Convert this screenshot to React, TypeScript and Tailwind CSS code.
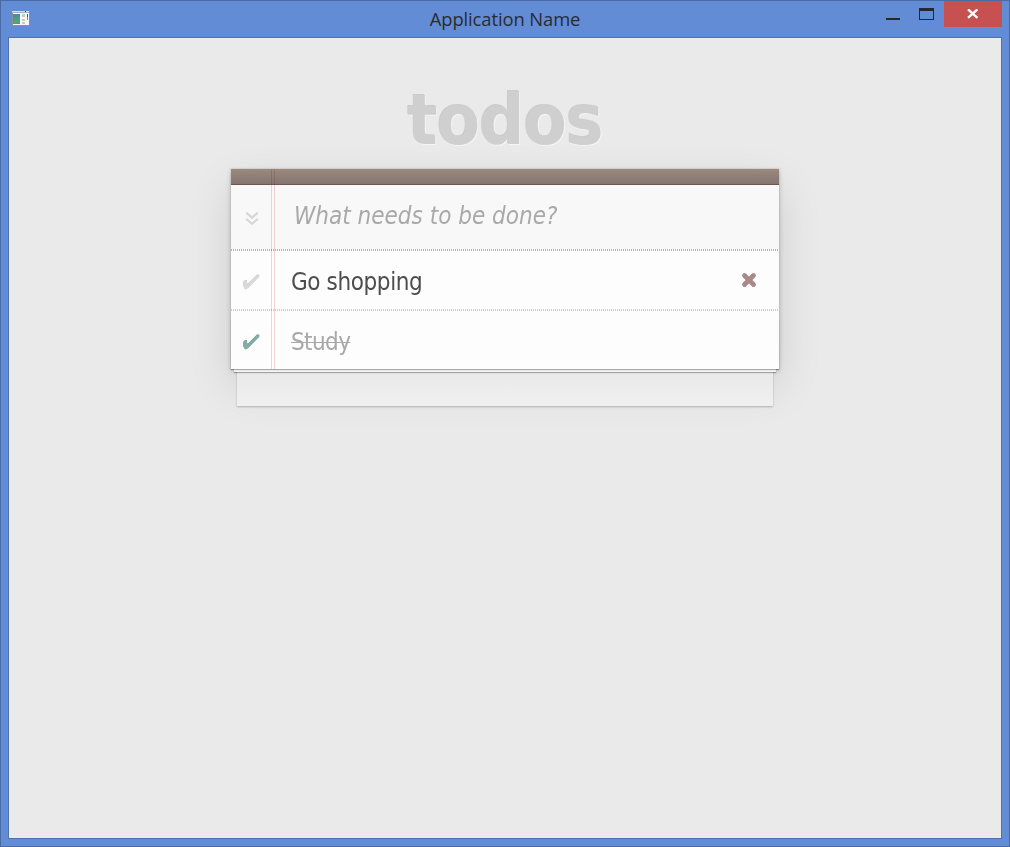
import React from "react";

const CHECK = "M1.3 10.3 L2.2 9.2 L4.6 8.6 L5.2 9.4 L4.8 11.6 L6 12 L15 3 L17.2 3 L17.2 5 L6.4 16 L4 17.6 L2.6 17 L1.3 14.5 Z";

function Check({ color, shadow }: { color: string; shadow: string }) {
  return (
    <svg width="19" height="20" viewBox="0 0 19 20" className="mt-[3px] ml-[11px]">
      <path d={CHECK} fill={shadow} transform="translate(0 -0.6)" />
      <path d={CHECK} fill={color} />
    </svg>
  );
}

function TitleBar() {
  return (
    <header className="relative flex h-9 shrink-0 items-start">
      <svg width="18" height="17" viewBox="0 0 18 17" className="mt-[10px] ml-[11px]" shapeRendering="crispEdges">
        <rect x="0" y="0" width="18" height="15" fill="#8b8f96" />
        <rect x="1" y="2" width="16" height="12" fill="#f6f6f6" />
        <rect x="0" y="0" width="17" height="1" fill="#d8dce4" />
        <rect x="0" y="1" width="17" height="1" fill="#a9b0bd" />
        <rect x="13" y="0" width="1" height="1" fill="#34507f" />
        <rect x="1" y="3" width="7" height="10" fill="#4c9b86" />
        <rect x="1" y="3" width="7" height="3" fill="#5189a9" />
        <rect x="2" y="9" width="5" height="3" fill="#58a56c" />
        <rect x="10" y="3" width="3" height="3" fill="#c8c8c8" />
        <rect x="10" y="8" width="3" height="2" fill="#c8c8c8" />
        <rect x="10" y="11" width="3" height="2" fill="#c8c8c8" />
        <rect x="15" y="3" width="1" height="3" fill="#32628c" />
        <rect x="15" y="6" width="1" height="3" fill="#5ba568" />
      </svg>
      <h1 className="absolute inset-x-0 top-[5px] text-center font-['Open_Sans',sans-serif] text-[18.4px] leading-[25px] tracking-[-0.1px] text-[#292b30]">
        Application Name
      </h1>
      <div className="ml-auto flex">
        <svg width="58" height="26" viewBox="0 0 58 26" shapeRendering="crispEdges">
          <rect x="0" y="17" width="14" height="2" fill="#2a2729" />
          <rect x="33" y="7" width="15" height="3" fill="#2a2729" />
          <path d="M33.5 7.5H47.5V18.5H33.5Z" fill="none" stroke="#2a2729" />
        </svg>
        <div className="mr-[7px] flex h-[26px] w-[58px] items-center justify-center bg-[#c75050]">
          <svg width="12" height="10" viewBox="0 0 12 10" className="-ml-px">
            <path d="M1 0.3 L10.4 8.9 M10.4 0.3 L1 8.9" stroke="#fff" strokeWidth="2.3" />
          </svg>
        </div>
      </div>
    </header>
  );
}

function DottedLine({ color }: { color: string }) {
  return (
    <svg width="548" height="2" className="block" shapeRendering="crispEdges">
      <path d="M0 1H548" stroke={color} strokeWidth="2" strokeDasharray="1 1" />
    </svg>
  );
}

function TodoCard() {
  return (
    <section className="relative isolate mt-6 w-[548px] bg-white/90 font-['DejaVu_Sans_Condensed','DejaVu_Sans',sans-serif] text-2xl shadow-[0_0_0_1px_rgba(0,0,0,0.06),0_2px_6px_rgba(0,0,0,0.2),0_17px_42px_rgba(0,0,0,0.12)]">
      <div className="absolute inset-x-[6px] -bottom-[37px] -z-10 h-[60px] bg-linear-to-b from-[#e9e9e9] from-40% to-[#f0f0f0] shadow-[0_1px_2px_rgba(0,0,0,0.25)]" />
      <div className="absolute inset-x-[3px] -bottom-[3px] -z-10 h-5 bg-[#f4f4f4] shadow-[0_1px_1px_rgba(0,0,0,0.3)]" />
      <div className="absolute inset-x-0 bottom-0 -z-10 h-[50px] shadow-[0_1px_1px_rgba(0,0,0,0.3)]" />
      <div className="relative bg-[#fdfdfd]">
        <div className="h-4 border-b border-[#6b5854] bg-linear-to-b from-[#9c897f] to-[#84756f]" />
        <div className="flex h-16 items-center bg-[#f8f8f8]">
          <svg width="14" height="15" viewBox="0 0 14 15" className="mt-[3px] ml-[14px] shrink-0">
            <path d="M1.2 1.6L7 6.7L12.8 1.6M1.2 7.8L7 12.9L12.8 7.8" fill="none" stroke="#d7d7d7" strokeWidth="2.2" />
          </svg>
          <span className="mb-[3px] ml-[35px] whitespace-nowrap text-[#a9a9a9] italic">What needs to be done?</span>
        </div>
        <DottedLine color="#b4b4b4" />
        <div className="flex h-[58px] items-center">
          <Check color="#d9d9d9" shadow="#c4c4c4" />
          <span className="mt-1 ml-[30px] whitespace-nowrap tracking-[-0.4px] text-[#4d4d4d]">Go shopping</span>
          <svg width="16" height="16" viewBox="0 0 16 16" className="mr-[22px] ml-auto">
            <path d="M3.5 3.5L12.5 12.5M12.5 3.5L3.5 12.5" stroke="#a88a8a" strokeWidth="4.8" strokeLinecap="round" />
          </svg>
        </div>
        <DottedLine color="#cccccc" />
        <div className="flex h-[58px] items-center">
          <Check color="#85ada7" shadow="#5f938b" />
          <span className="mt-1 ml-[30px] whitespace-nowrap tracking-[-0.6px] text-[#a9a9a9] line-through decoration-1">Study</span>
        </div>
        <div className="absolute inset-y-0 left-10 w-1 border-x border-[#f5d6d6] mix-blend-multiply" />
      </div>
    </section>
  );
}

export default function App() {
  return (
    <div className="flex h-[847px] w-[1010px] flex-col overflow-hidden border border-[#4a6aa3] bg-[#628cd5]">
      <TitleBar />
      <main className="mx-[7px] mb-[7px] flex flex-1 flex-col items-center border border-[#4d73b3] bg-[#eaeaea]">
        <h2 className="mt-[47px] h-[60px] font-['DejaVu_Sans_Condensed','DejaVu_Sans',sans-serif] text-[70px] leading-[70px] font-bold tracking-[-0.8px] text-[#cfcfcf] [text-shadow:-1px_-1px_0_rgba(0,0,0,0.13),1px_1px_0_rgba(255,255,255,0.5)]">
          todos
        </h2>
        <TodoCard />
      </main>
    </div>
  );
}
